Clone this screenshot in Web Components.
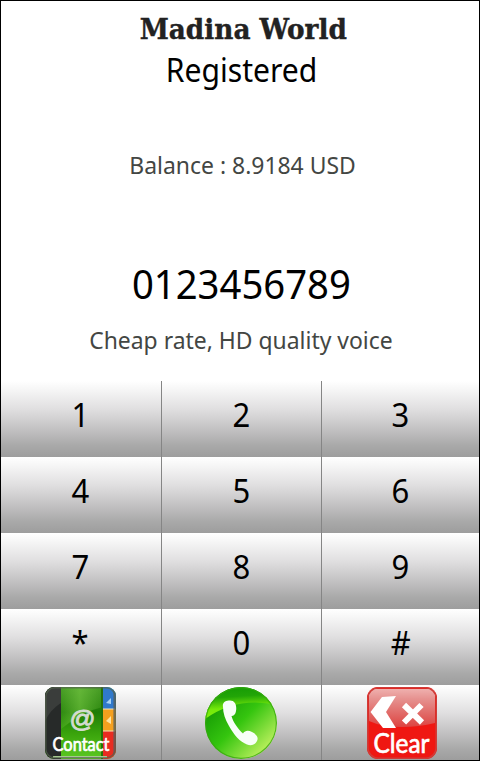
<!DOCTYPE html>
<html lang="en">
<head>
<meta charset="utf-8">
<title>Madina World</title>
<style>
  body {
    margin: 0;
    background: #fff;
  }
</style>
</head>
<body>
<dialer-app></dialer-app>

<script>
const define = (name, html) => {
  const template = document.createElement("template");
  template.innerHTML = html;

  customElements.define(name, class extends HTMLElement {
    constructor() {
      super();
      this.attachShadow({ mode: "open" });
      this.shadowRoot.appendChild(template.content.cloneNode(true));
    }
  });
};

define("text-line", /* html */ `
  <style>
    :host {
      display: flex;
      justify-content: center;
      white-space: nowrap;
    }

    .text-line__text {
      display: block;
      transform: scaleX(var(--stretch, 1));
    }
  </style>
  <span class="text-line__text"><slot></slot></span>
`);

define("dial-key", /* html */ `
  <style>
    :host {
      display: flex;
      justify-content: center;
      height: 76px;
      box-sizing: border-box;
      border-left: 1px solid #858585;
      padding-right: 1px;
      background: linear-gradient(#fff 0%, #f7f7f7 10%, #e0dfe0 37%, #c3c2c3 63%, #a9a9a9 85%, #9d9d9d 100%);
      color: #000;
      font-size: 33px;
      line-height: 68px;
    }

    :host([first]) {
      border-left: none;
    }

    :host([last]) {
      padding-right: 0;
    }

    :host([action]) {
      height: 75px;
      padding-top: 2px;
      line-height: 0;
    }

    :host([action][last]) {
      padding-left: 2px;
    }

    :host([action][first]) {
      padding-left: 1px;
    }

    .dial-key__label {
      display: block;
      transform: scaleX(0.94);
    }

    :host([action]) .dial-key__label {
      transform: none;
    }
  </style>
  <span class="dial-key__label"><slot></slot></span>
`);

define("contact-icon", /* html */ `
  <style>
    :host {
      display: block;
      width: 72px;
      height: 72px;
    }

    svg {
      overflow: visible;
    }
  </style>
  <svg width="72" height="72" viewBox="0 0 72 72">
    <defs>
      <linearGradient id="cover" x1="0" y1="0" x2="0" y2="1">
        <stop offset="0" stop-color="#3f9420" />
        <stop offset=".35" stop-color="#1f7c06" />
        <stop offset=".65" stop-color="#3aa40c" />
        <stop offset="1" stop-color="#5cc922" />
      </linearGradient>
      <linearGradient id="shine" x1="0" y1="0" x2="1" y2="0">
        <stop offset="0" stop-color="#8cdb52" stop-opacity=".15" />
        <stop offset=".45" stop-color="#8cdb52" stop-opacity=".5" />
        <stop offset="1" stop-color="#8cdb52" stop-opacity=".1" />
      </linearGradient>
      <clipPath id="book"><rect x="0" y="0" width="71" height="72" rx="9" /></clipPath>
    </defs>
    <g clip-path="url(#book)">
      <rect width="72" height="72" fill="url(#cover)" />
      <path d="M16 0H58V20Q38 24 16 42Z" fill="url(#shine)" />
      <rect width="16" height="72" fill="#272a29" />
      <path d="M0 0H16V16Q6 22 0 34Z" fill="#3a3d3b" />
      <rect x="56" width="2" height="72" fill="#267009" />
      <rect x="58" width="14" height="22" fill="#3079cb" />
      <rect x="58" y="22" width="14" height="22" fill="#f5a01e" />
      <rect x="58" y="44" width="14" height="28" fill="#e82c21" />
      <path d="M58 22H70M58 44H70" stroke="#efe5bb" stroke-width="1" />
      <path d="M61 16L66 11V17Z" fill="#a7d2f4" />
      <path d="M61 34L66 29V37Z" fill="#ffe3a0" />
      <path d="M69.500 3V69" stroke="#595f65" stroke-opacity=".65" stroke-width="2.500" />
      <path d="M8 70H62" stroke="#a5c990" stroke-width="2" />
      <rect x=".8" y=".8" width="69.400" height="70" rx="9" fill="none" stroke="#53634b" stroke-opacity=".7" stroke-width="1.400" />
    </g>
    <text x="24.500" y="39.500" textLength="26" lengthAdjust="spacingAndGlyphs" font-family="Liberation Sans" font-size="24" fill="#d3dcd0" stroke="#d3dcd0" stroke-width=".9">@</text>
    <text x="7.500" y="63.500" textLength="57" lengthAdjust="spacingAndGlyphs" font-family="Lato, sans-serif" font-size="18.500" fill="#fff" stroke="#fff" stroke-width=".7">Contact</text>
  </svg>
`);

define("call-icon", /* html */ `
  <style>
    :host {
      display: block;
      width: 72px;
      height: 72px;
    }
  </style>
  <svg width="72" height="72" viewBox="0 0 72 72">
    <defs>
      <linearGradient id="ball" x1=".15" y1=".2" x2=".85" y2=".9">
        <stop offset="0" stop-color="#169b04" />
        <stop offset=".45" stop-color="#35c50f" />
        <stop offset="1" stop-color="#c0f160" />
      </linearGradient>
      <linearGradient id="cap" x1=".35" y1="0" x2=".5" y2="1">
        <stop offset="0" stop-color="#159b05" />
        <stop offset=".3" stop-color="#22a507" />
        <stop offset=".65" stop-color="#74ea0a" />
        <stop offset="1" stop-color="#83f00c" />
      </linearGradient>
      <clipPath id="disc"><circle cx="36" cy="36" r="36" /></clipPath>
    </defs>
    <g clip-path="url(#disc)">
      <rect width="72" height="72" fill="url(#ball)" />
      <path d="M0 0H72V18Q32 9 0 32Z" fill="url(#cap)" />
      <circle cx="36" cy="36" r="35.400" fill="none" stroke="#38a70f" stroke-opacity=".8" stroke-width="1.200" />
    </g>
    <path d="M18 20C17 15 21 13.500 25 13.500C30 13.500 32 18 31 24C30.500 28 28 29 26.500 29C28 35 33 42 38 46.500C40 43.500 43 43 47 45C51 47 54 50 52 54C50 58 46 59 42 57.500C35 55 29 48 24 39C20 32 18 26 18 20Z" fill="#f7fff7" />
  </svg>
`);

define("clear-icon", /* html */ `
  <style>
    :host {
      display: block;
      width: 72px;
      height: 72px;
    }

    svg {
      overflow: visible;
    }
  </style>
  <svg width="72" height="72" viewBox="0 0 72 72">
    <defs>
      <linearGradient id="gloss" x1="0" y1="0" x2="0" y2="1">
        <stop offset="0" stop-color="#efb0ae" />
        <stop offset=".3" stop-color="#e58d8b" />
        <stop offset="1" stop-color="#dd4441" />
      </linearGradient>
      <clipPath id="tile"><rect x="1" y="0" width="70" height="72" rx="11" /></clipPath>
    </defs>
    <g clip-path="url(#tile)">
      <rect width="72" height="72" fill="#ef1712" />
      <path d="M3 2H69V36Q53 40 36 40Q16 40 3 34Z" fill="url(#gloss)" />
      <rect x="1.800" y=".8" width="68.400" height="70.400" rx="10.500" fill="none" stroke="#d03c38" stroke-width="1.600" />
    </g>
    <path d="M4.500 25L16 10L30 9L20 25L30 41H17Z" fill="#fff" />
    <path d="M38 18L56 35.500M55.500 18L38 35.500" stroke="#fff" stroke-width="6" />
    <text x="7.500" y="65.500" textLength="56" lengthAdjust="spacingAndGlyphs" font-family="Lato, sans-serif" font-size="27" fill="#fff" stroke="#fff" stroke-width=".7">Clear</text>
  </svg>
`);

define("dial-pad", /* html */ `
  <style>
    :host {
      display: grid;
      grid-template-columns: 160px 160px 158px;
    }
  </style>
  <slot></slot>
`);

define("dialer-app", /* html */ `
  <style>
    :host {
      display: flex;
      flex-direction: column;
      width: 480px;
      height: 761px;
      box-sizing: border-box;
      border: 1px solid #000;
      background: #fff;
      font-family: "Noto Sans", "Open Sans", sans-serif;
      color: #000;
    }

    header {
      height: 380px;
      flex: none;
    }

    .title {
      --stretch: 0.975;
      padding: 12px 0 0 7px;
      font: bold 27px/34px "DejaVu Serif", serif;
      color: #222;
      -webkit-text-stroke: 0.4px #222;
    }

    .status {
      --stretch: 0.94;
      padding: 1px 0 0 3px;
      font-size: 32px;
      line-height: 44px;
    }

    .balance,
    .slogan {
      --stretch: 0.955;
      font-size: 24px;
      line-height: 32px;
      color: #434643;
    }

    .balance {
      padding: 57px 0 0 5px;
    }

    .number {
      --stretch: 0.957;
      padding: 76px 0 0 2px;
      font-size: 40px;
      line-height: 54px;
    }

    .slogan {
      padding: 13px 0 0 2px;
    }
  </style>
  <header>
    <text-line class="title">Madina World</text-line>
    <text-line class="status">Registered</text-line>
    <text-line class="balance">Balance : 8.9184 USD</text-line>
    <text-line class="number">0123456789</text-line>
    <text-line class="slogan">Cheap rate, HD quality voice</text-line>
  </header>
  <dial-pad>
    <dial-key first>1</dial-key>
    <dial-key>2</dial-key>
    <dial-key last>3</dial-key>
    <dial-key first>4</dial-key>
    <dial-key>5</dial-key>
    <dial-key last>6</dial-key>
    <dial-key first>7</dial-key>
    <dial-key>8</dial-key>
    <dial-key last>9</dial-key>
    <dial-key first>*</dial-key>
    <dial-key>0</dial-key>
    <dial-key last>#</dial-key>
    <dial-key first action><contact-icon></contact-icon></dial-key>
    <dial-key action><call-icon></call-icon></dial-key>
    <dial-key last action><clear-icon></clear-icon></dial-key>
  </dial-pad>
`);
</script>
</body>
</html>
